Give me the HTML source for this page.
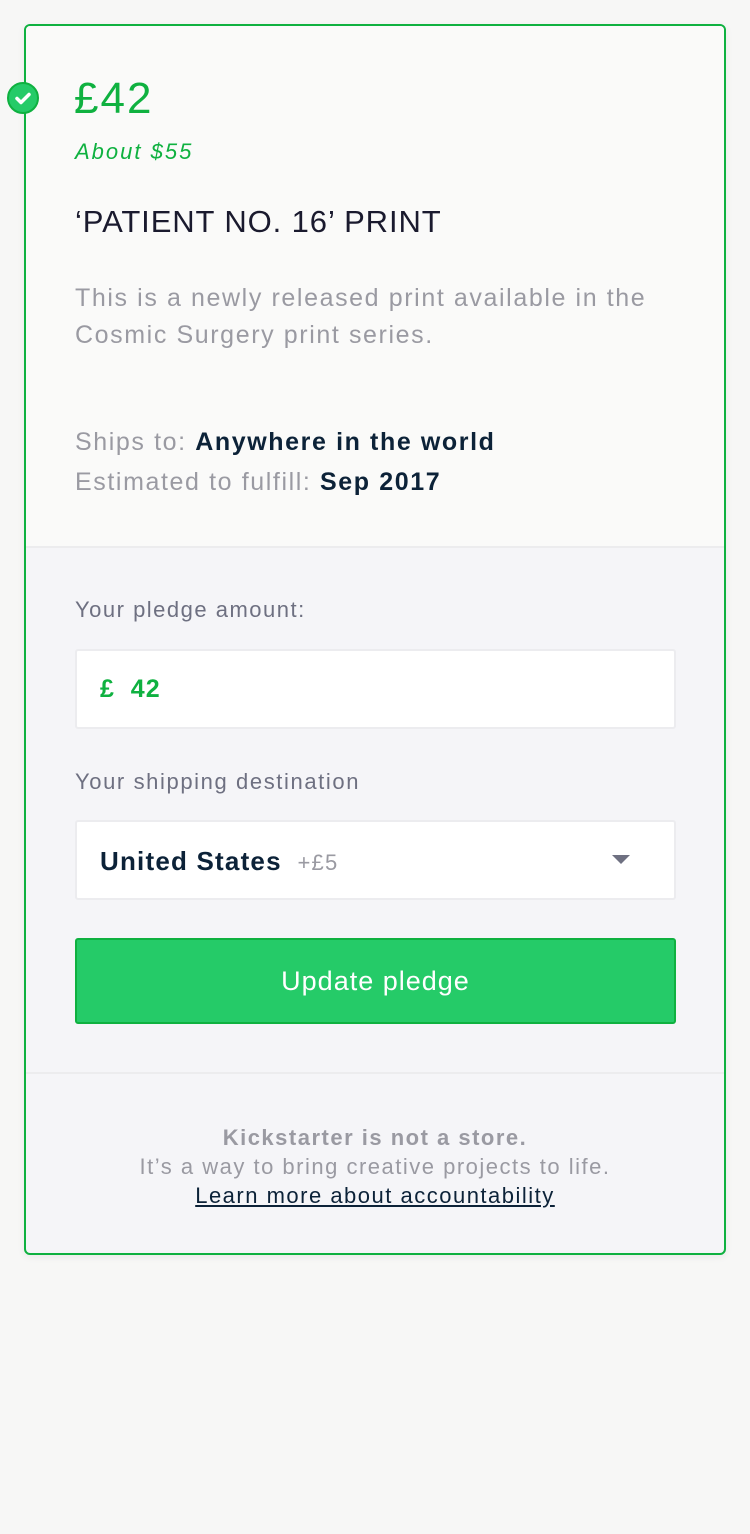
<!DOCTYPE html>
<html><head><style>
body{margin:0;background:#f7f7f6;width:750px;height:1534px;position:relative;font-family:"Liberation Sans",sans-serif;}
.card{position:absolute;left:24px;top:24px;width:698px;height:1227px;border:2px solid #0fb140;border-radius:6px;background:#f5f5f8;box-shadow:0 2px 8px rgba(0,0,0,0.06);overflow:hidden}
.top{position:absolute;left:0;top:0;width:698px;height:520px;background:#fafaf9;border-bottom:2px solid #ececee}
.t{position:absolute;white-space:nowrap}
.chk{position:absolute;left:7px;top:82px;width:32px;height:32px;border-radius:50%;background:#25cb68;border:2px solid #0fb140;box-sizing:border-box}
.box{position:absolute;left:49px;width:601px;height:80px;background:#fff;border:2px solid #ececef;border-radius:3px;box-sizing:border-box}
.btn{position:absolute;left:49px;top:912px;width:601px;height:86px;background:#25cb68;border:2px solid #0fb140;border-radius:3px;box-sizing:border-box;color:#fff;font-size:27px;text-align:center;line-height:82px;letter-spacing:1px}
.hr{position:absolute;left:0;top:1046px;width:698px;height:2px;background:#ececee}
</style></head><body>
<div class="card">
<div class="top"></div>
<div class="t" style="left:48px;top:48px;font-size:44px;color:#0fb140;letter-spacing:2px">£42</div>
<div class="t" style="left:49px;top:113px;font-size:22px;color:#0fb140;font-style:italic;letter-spacing:2px">About $55</div>
<div class="t" style="left:49px;top:178px;font-size:31px;color:#1a1a2e;letter-spacing:0.9px">‘PATIENT NO. 16’ PRINT</div>
<div class="t" style="left:49px;top:254px;font-size:25px;color:#9a9aa2;line-height:37px;letter-spacing:1.6px">This is a newly released print available in the<br>Cosmic Surgery print series.</div>
<div class="t" style="left:49px;top:396px;font-size:25px;color:#9a9aa2;line-height:40px;letter-spacing:1.6px">Ships to: <b style="color:#0c2238">Anywhere in the world</b><br>Estimated to fulfill: <b style="color:#0c2238">Sep 2017</b></div>
<div class="t" style="left:49px;top:571px;font-size:22px;color:#6e7081;letter-spacing:1.5px">Your pledge amount:</div>
<div class="box" style="top:623px"><span class="t" style="left:23px;top:24px;font-size:25px;font-weight:bold;color:#0fb140;letter-spacing:1px">£&nbsp;&nbsp;42</span></div>
<div class="t" style="left:49px;top:743px;font-size:22px;color:#6e7081;letter-spacing:1.6px">Your shipping destination</div>
<div class="box" style="top:794px"><span class="t" style="left:23px;top:24px;font-size:26px;font-weight:bold;color:#0c2238;letter-spacing:1.2px">United States <span style="font-weight:normal;font-size:22px;color:#9a9aa2">&nbsp;+£5</span></span>
<svg style="position:absolute;left:535px;top:33px" width="18" height="10"><path d="M0 0H18L9 9Z" fill="#6e7081"/></svg></div>
<div class="btn">Update pledge</div>
<div class="hr"></div>
<div class="t" style="left:0;width:698px;text-align:center;top:1097px;font-size:22px;color:#9a9aa2;line-height:29px;white-space:normal;letter-spacing:1.5px"><b>Kickstarter is not a store.</b><br>It’s a way to bring creative projects to life.<br><span style="color:#0c2238;text-decoration:underline">Learn more about accountability</span></div>
</div>
<div class="chk"><svg width="28" height="28" style="position:absolute;left:0;top:0"><path d="M8 14.5l4 4 8-8" stroke="#fff" stroke-width="3.5" fill="none" stroke-linecap="round" stroke-linejoin="round"/></svg></div>
</body></html>
